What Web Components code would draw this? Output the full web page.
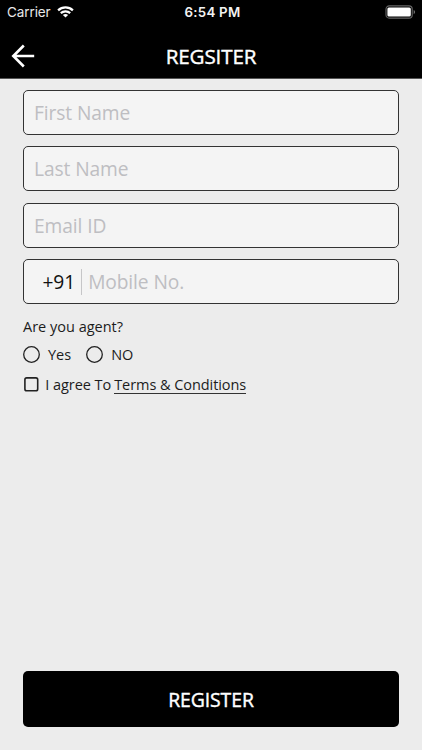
<!DOCTYPE html>
<html lang="en">
<head>
<meta charset="utf-8">
<title>Register</title>
<style>
html, body { margin: 0; height: 100%; }
body { background: #ececec; font-family: "Open Sans", "Noto Sans", sans-serif; color: #1c1c1c; overflow: hidden; }
</style>
</head>
<body>
<register-page></register-page>
<script>
function define(name, html) {
  const template = document.createElement('template');
  template.innerHTML = html;
  customElements.define(name, class extends HTMLElement {
    constructor() {
      super();
      this.attachShadow({ mode: 'open' }).append(template.content.cloneNode(true));
    }
  });
}

define('status-bar', `
<style>
:host { display: grid; grid-template-columns: 1fr auto 1fr; align-items: center; height: 24px; padding: 0 6px 0 7px; background: #000; color: #fff; font: 14px/24px Inter, sans-serif; box-sizing: border-box; }
.left { display: flex; align-items: center; gap: 6px; color: #e8e8e8; }
.carrier { font-size: 13.5px; letter-spacing: -0.1px; }
.time { font-size: 13.3px; font-weight: 600; letter-spacing: 0.25px; padding-left: 2px; color: #f2f2f2; }
svg { display: block; }
.battery { justify-self: end; }
</style>
<div class="left"><span class="carrier">Carrier</span>
<svg width="17" height="12" viewBox="0 0 17 12" fill="none" stroke="#fff" stroke-width="2.2"><path d="M1.1 4.4C5.2.4 11.8.4 15.9 4.4M3.8 7.1C6.4 4.7 10.6 4.7 13.2 7.1"/><path d="M8.5 11.6L5.9 9C7.4 7.7 9.6 7.7 11.1 9Z" fill="#fff" stroke="none"/></svg></div>
<span class="time">6:54 PM</span>
<svg class="battery" width="31" height="14" viewBox="0 0 31 14"><rect x="1" y=".9" width="26.2" height="12.2" rx="3.2" fill="none" stroke="#656565" stroke-width="1.1"/><rect x="2.4" y="2.4" width="23.4" height="9.2" rx="1.5" fill="#fff"/><path d="M28.7 5v4.2c1.8-.7 1.8-3.5 0-4.2Z" fill="#777"/></svg>`);

define('nav-bar', `
<style>
:host { display: grid; grid-template-columns: 46px 1fr 46px; align-items: center; height: 55px; background: #000; color: #fff; border-bottom: 1px solid #555; box-sizing: border-box; }
svg { display: block; margin: 10px 0 0 11px; }
.title { text-align: center; font-size: 20.6px; letter-spacing: -0.15px; line-height: 28px; font-weight: 500; -webkit-text-stroke: 0.4px #fff; padding-top: 9px; }
</style>
<svg width="24" height="24" viewBox="0 0 24 24" fill="none" stroke="#fff" stroke-width="2.6"><path d="M23.2 12H2.4M12.8 1.5L2.3 12L12.8 22.5"/></svg>
<div class="title"><slot></slot></div>`);

define('text-field', `
<style>
:host { display: flex; align-items: center; height: 45px; box-sizing: border-box; border: 1px solid #333; border-radius: 5px; background: #f4f4f4; padding: 1px 10px 0; color: #bebec2; font-size: 19.2px; letter-spacing: -0.1px; line-height: 26px; white-space: nowrap; }
::slotted([slot="prefix"]) { color: #111; padding: 0 6px 0 8.5px; margin-right: 6px; border-right: 1px solid #c6c6c8; }
</style>
<slot name="prefix"></slot><slot></slot>`);

define('radio-option', `
<style>
:host { display: flex; align-items: center; gap: 8px; font-size: 14.5px; line-height: 20px; }
svg { display: block; }
</style>
<svg width="17" height="17"><circle cx="8.5" cy="8.5" r="7.8" fill="none" stroke="#222" stroke-width="1.3"/></svg><span><slot></slot></span>`);

define('check-option', `
<style>
:host { display: flex; align-items: center; font-size: 14.5px; letter-spacing: -0.06px; line-height: 20px; white-space: nowrap; }
svg { display: block; margin: 0 6.3px 0 1px; }
</style>
<svg width="15" height="15"><rect x=".9" y=".9" width="12.8" height="12.8" rx="1.8" fill="none" stroke="#222" stroke-width="1.6"/></svg><slot></slot>`);

define('action-button', `
<style>
:host { display: flex; align-items: center; justify-content: center; height: 56px; border-radius: 5px; background: #000; color: #fff; font-size: 19.4px; letter-spacing: -0.1px; line-height: 26px; font-weight: 500; -webkit-text-stroke: 0.4px #fff; padding-top: 1px; box-sizing: border-box; }
</style>
<span><slot></slot></span>`);

define('register-page', `
<style>
:host { display: flex; flex-direction: column; height: 750px; width: 422px; }
main { flex: 1; display: flex; flex-direction: column; padding: 11px 23px 23px; }
.fields { display: grid; gap: 11.3px; }
.question { margin-top: 13px; font-size: 14.5px; line-height: 20px; }
.radios { display: flex; gap: 15px; margin-top: 8px; }
check-option { margin-top: 10px; }
.link { margin-left: 3px; border-bottom: 1px solid #333; line-height: 17px; }
action-button { margin-top: auto; }
</style>
<status-bar></status-bar>
<nav-bar>REGSITER</nav-bar>
<main>
<div class="fields">
<text-field>First Name</text-field>
<text-field>Last Name</text-field>
<text-field>Email ID</text-field>
<text-field><span slot="prefix">+91</span>Mobile No.</text-field>
</div>
<div class="question">Are you agent?</div>
<div class="radios"><radio-option>Yes</radio-option><radio-option>NO</radio-option></div>
<check-option><span>I agree To</span><span class="link">Terms &amp; Conditions</span></check-option>
<action-button>REGISTER</action-button>
</main>`);
</script>
</body>
</html>
